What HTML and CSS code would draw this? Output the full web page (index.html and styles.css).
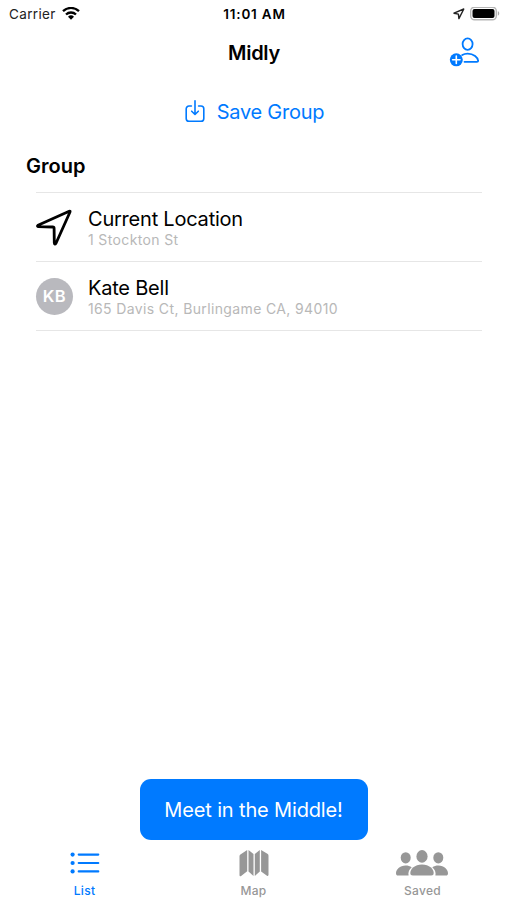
FILE: index.html
```html
<!DOCTYPE html>
<html lang="en">
<head>
    <meta charset="UTF-8">
    <meta name="viewport" content="width=device-width, initial-scale=1.0">
    <title>Midly</title>
    <link rel="stylesheet" href="styles.css">
</head>
<body>
    <div class="status-bar">
        <div class="carrier">
            <span>Carrier</span>
            <svg width="18" height="14" viewBox="0 0 18 14" fill="none" stroke="#000" stroke-width="2.3">
                <path d="M1 4.2a11.5 11.5 0 0 1 16 0"/>
                <path d="M4 7.5a7.2 7.2 0 0 1 10 0"/>
                <path d="M9 12.8L6 9.8a4.3 4.3 0 0 1 6 0z" fill="#000" stroke="none"/>
            </svg>
        </div>
        <div class="time">11:01 AM</div>
        <div class="status-icons">
            <svg width="12" height="12" viewBox="0 0 12 12" fill="none" stroke="#222" stroke-width="1.4" stroke-linejoin="round">
                <path d="M10.8 1L1 5.2l4.4.9.5 4.5z"/>
            </svg>
            <svg width="31" height="14" viewBox="0 0 31 14">
                <rect x=".7" y=".2" width="25.6" height="12.6" rx="3.8" fill="#fff" stroke="#b5b5b5" stroke-width="1.4"/>
                <rect x="2.5" y="1.9" width="22" height="9.2" rx="2" fill="#000"/>
                <path d="M27.8 4.3c1.9.5 1.9 3.9 0 4.4z" fill="#aaa"/>
            </svg>
        </div>
    </div>

    <header class="nav-bar">
        <h1>Midly</h1>
        <a href="#" class="add-person" aria-label="Add person">
            <svg width="32" height="30" viewBox="0 0 32 30" fill="none" stroke="#007aff" stroke-width="1.8">
                <ellipse cx="18.6" cy="7.1" rx="5" ry="5.7"/>
                <path d="M13.2 18.1c1.5-.9 3.3-1.4 5.4-1.4 6.2 0 10.3 3.9 10.5 7 .1.9-.4 1.1-1.1 1.1H15.5" stroke-linecap="round"/>
                <circle cx="7.3" cy="22.8" r="6.5" fill="#007aff" stroke="none"/>
                <path d="M7.3 19.1v7.4M3.6 22.8h7.4" stroke="#fff" stroke-width="1.6" stroke-linecap="round"/>
            </svg>
        </a>
    </header>

    <a href="#" class="save-group">
        <svg width="20" height="24" viewBox="0 0 20 24" fill="none" stroke="#007aff" stroke-width="1.6" stroke-linecap="round" stroke-linejoin="round">
            <path d="M6.4 6H4a2.8 2.8 0 0 0-2.8 2.8v9.6A2.8 2.8 0 0 0 4 21.2h12a2.8 2.8 0 0 0 2.8-2.8V8.8A2.8 2.8 0 0 0 16 6h-2.4"/>
            <path d="M10 .8v13.4M6.7 11.2l3.3 3.3 3.3-3.3"/>
        </svg>
        <span>Save Group</span>
    </a>

    <main>
        <h2>Group</h2>
        <ul class="group-list">
            <li>
                <svg class="location" width="37" height="37" viewBox="1 0 37 37" fill="none" stroke="#000" stroke-width="2.8" stroke-linejoin="round">
                    <path d="M34.2 2.3Q35.5 1.7 34.9 3.2L21 34.2Q19.6 36.4 19.3 33.8L19.1 19.4Q19.1 18 17.7 18L3.2 17.7Q1.8 17.3 3 16.2Z"/>
                </svg>
                <div class="details">
                    <div class="name">Current Location</div>
                    <div class="address">1 Stockton St</div>
                </div>
            </li>
            <li>
                <div class="avatar">KB</div>
                <div class="details">
                    <div class="name">Kate Bell</div>
                    <div class="address">165 Davis Ct, Burlingame CA, 94010</div>
                </div>
            </li>
        </ul>
    </main>

    <button type="button" class="meet-button">Meet in the Middle!</button>

    <nav class="tab-bar">
        <a href="#" class="active">
            <svg width="30" height="28" viewBox="0 0 30 28" fill="none" stroke="currentColor" stroke-width="2.1" stroke-linecap="round">
                <path d="M8.7 5.6h19.6M8.7 14h19.6M8.7 22.4h19.6"/>
                <g fill="currentColor" stroke="none">
                    <circle cx="2.6" cy="5.6" r="2.1"/>
                    <circle cx="2.6" cy="14" r="2.1"/>
                    <circle cx="2.6" cy="22.4" r="2.1"/>
                </g>
            </svg>
            <span>List</span>
        </a>
        <a href="#">
            <svg width="30" height="28" viewBox="0 0 30 28" fill="currentColor">
                <path d="M8.2 1v21.3L2.1 27Q.5 28 .5 26V7.2Q.5 6.2 1.4 5.6Z"/>
                <path d="M9.5 1l5 3.9v22.2l-5-4.5z"/>
                <path d="M20.8 1v21.6l-5 4.5V4.9z"/>
                <path d="M22.1 1l6.3 3.8q1.1.7 1.1 2v18.8q0 2-1.5 1.2l-5.9-4.3z"/>
            </svg>
            <span>Map</span>
        </a>
        <a href="#">
            <svg width="54" height="28" viewBox="1 0 54 28" fill="currentColor">
                <ellipse cx="10.7" cy="8.8" rx="5" ry="5.6"/>
                <ellipse cx="43.3" cy="8.8" rx="5" ry="5.6"/>
                <path d="M16.7 18.2c-1.7-1.2-3.8-1.8-6-1.8C4.8 16.4 1 20.4 1 24.2c0 1.5.7 2.3 2.1 2.3h10.5c-.8-3.3.8-6.4 3.1-8.3z"/>
                <path d="M37.3 18.2c1.7-1.2 3.8-1.8 6-1.8 5.9 0 9.7 4 9.7 7.8 0 1.5-.7 2.3-2.1 2.3H40.4c.8-3.3-.8-6.4-3.1-8.3z"/>
                <ellipse cx="27" cy="7.4" rx="5.6" ry="6.3"/>
                <path d="M27 15.5c7.3 0 11.7 4.6 11.7 8.5 0 1.7-.9 2.5-2.5 2.5H17.8c-1.6 0-2.5-.8-2.5-2.5 0-3.9 4.4-8.5 11.7-8.5z"/>
            </svg>
            <span>Saved</span>
        </a>
    </nav>
</body>
</html>
```
FILE: styles.css
```css
* {
    box-sizing: border-box;
}

body {
    display: flex;
    flex-direction: column;
    height: 100vh;
    margin: 0;
    background-color: #fff;
    color: #000;
    font-family: Inter, "Liberation Sans", sans-serif;
}

a {
    text-decoration: none;
    color: #007aff;
}

.status-bar {
    display: grid;
    grid-template-columns: 1fr auto 1fr;
    align-items: center;
    height: 27px;
    padding: 0 6px 0 8px;
    font-size: 13.5px;
}

.carrier {
    display: flex;
    align-items: center;
    gap: 6px;
    padding-left: 1px;
    color: #222;
    letter-spacing: 0.35px;
}

.time {
    font-weight: 600;
    letter-spacing: 0.8px;
}

.status-icons {
    display: flex;
    align-items: center;
    justify-content: flex-end;
    gap: 5px;
}

.nav-bar {
    display: grid;
    grid-template-columns: 1fr auto 1fr;
    align-items: center;
    height: 50px;
    padding: 0 26px 0 27px;
}

h1 {
    grid-column: 2;
    margin: 0;
    padding-top: 1px;
    font-size: 20px;
    font-weight: 600;
    letter-spacing: -0.3px;
}

.add-person {
    display: flex;
    justify-content: flex-end;
}

.save-group {
    display: flex;
    align-items: center;
    justify-content: center;
    gap: 12px;
    height: 69px;
    padding-left: 2px;
    font-size: 20px;
    letter-spacing: -0.25px;
}

h2 {
    margin: 0;
    padding-left: 26px;
    font-size: 20px;
    font-weight: 600;
    line-height: 40px;
}

.group-list {
    margin: 6px 25px 0 36px;
    padding: 0;
    list-style: none;
    border-top: 1px solid #e6e6e6;
}

.group-list li {
    display: flex;
    align-items: center;
    gap: 15px;
    height: 69px;
    border-bottom: 1px solid #e6e6e6;
}

.avatar {
    width: 37px;
    height: 37px;
    border-radius: 50%;
    background-color: #b9b9be;
    color: #fff;
    font-size: 16.5px;
    font-weight: 600;
    line-height: 37px;
    letter-spacing: 0.4px;
    text-align: center;
}

.details {
    padding-top: 2px;
}

.name {
    font-size: 20px;
    line-height: 24px;
    letter-spacing: -0.22px;
}

.address {
    color: #b8b8b8;
    font-size: 14px;
    line-height: 18px;
    letter-spacing: 0.37px;
}

.meet-button {
    align-self: center;
    width: 228px;
    height: 61px;
    margin-top: auto;
    padding: 0;
    border: none;
    border-radius: 11px;
    background-color: #007aff;
    color: #fff;
    font-family: inherit;
    font-size: 20px;
    letter-spacing: -0.15px;
}

.tab-bar {
    display: grid;
    grid-template-columns: repeat(3, 1fr);
    height: 60px;
    padding-top: 9px;
}

.tab-bar a {
    display: flex;
    flex-direction: column;
    align-items: center;
    gap: 6px;
    color: #979797;
    font-size: 12px;
    font-weight: 500;
    line-height: 16px;
    letter-spacing: 0.3px;
}

.tab-bar .active {
    color: #007aff;
}
```
